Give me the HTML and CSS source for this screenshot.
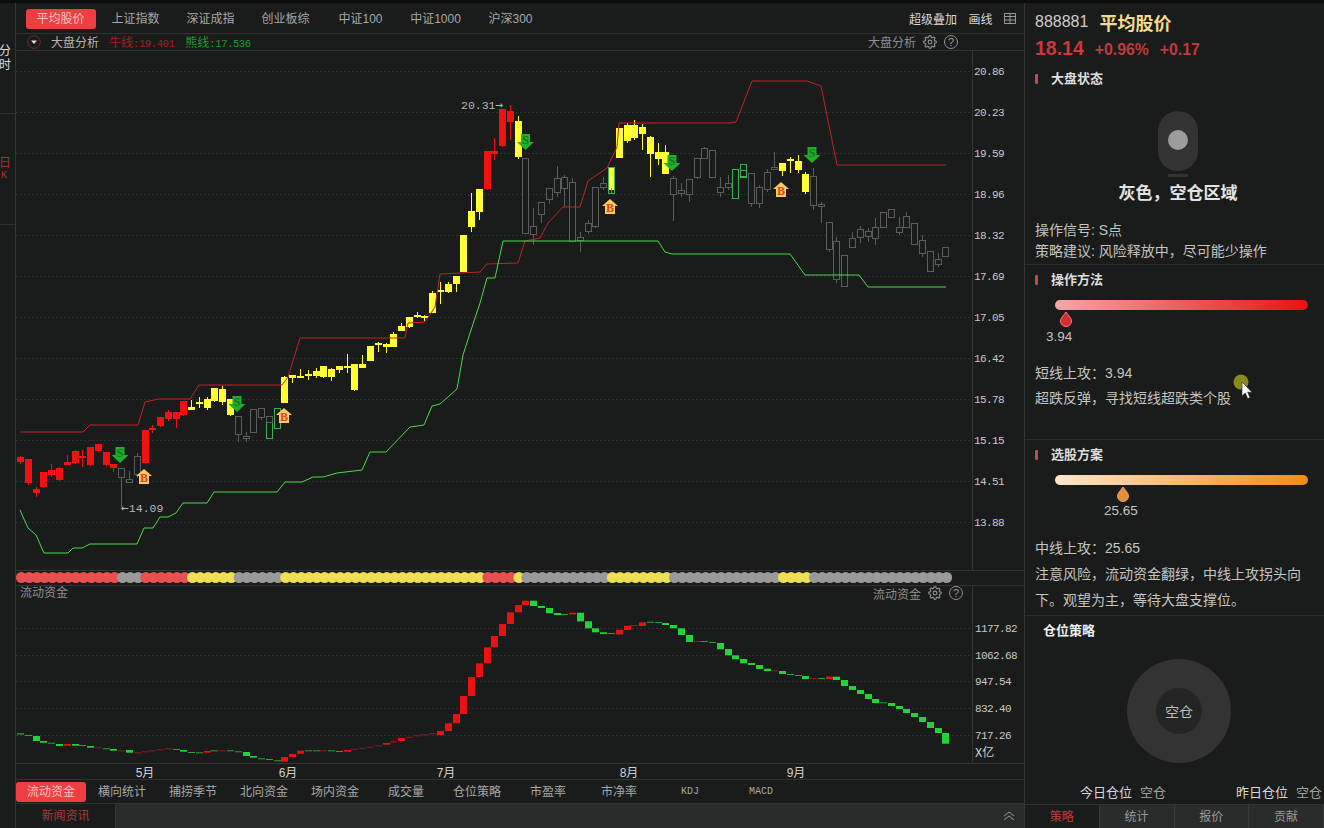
FILE: index.html
```html
<!DOCTYPE html>
<html lang="en">
<head>
  <meta charset="UTF-8"/>
  <title>平均股价</title>
  <link rel="stylesheet" href="styles.css">
</head>
<body>
<svg class="defs">
  <symbol id="gear" viewBox="0 0 24 24">
    <circle cx="12" cy="12" r="3.2"/>
    <path d="M19.4 15a1.65 1.65 0 0 0 .33 1.82l.06.06a2 2 0 0 1 0 2.83 2 2 0 0 1-2.83 0l-.06-.06a1.65 1.65 0 0 0-1.82-.33 1.65 1.65 0 0 0-1 1.51V21a2 2 0 0 1-2 2 2 2 0 0 1-2-2v-.09A1.65 1.65 0 0 0 9 19.4a1.65 1.65 0 0 0-1.82.33l-.06.06a2 2 0 0 1-2.83 0 2 2 0 0 1 0-2.83l.06-.06a1.65 1.65 0 0 0 .33-1.82 1.65 1.65 0 0 0-1.51-1H3a2 2 0 0 1-2-2 2 2 0 0 1 2-2h.09A1.65 1.65 0 0 0 4.6 9a1.65 1.65 0 0 0-.33-1.82l-.06-.06a2 2 0 0 1 0-2.83 2 2 0 0 1 2.83 0l.06.06a1.65 1.65 0 0 0 1.82.33H9a1.65 1.65 0 0 0 1-1.51V3a2 2 0 0 1 2-2 2 2 0 0 1 2 2v.09a1.65 1.65 0 0 0 1 1.51 1.65 1.65 0 0 0 1.82-.33l.06-.06a2 2 0 0 1 2.83 0 2 2 0 0 1 0 2.83l-.06.06a1.65 1.65 0 0 0-.33 1.82V9a1.65 1.65 0 0 0 1.51 1H21a2 2 0 0 1 2 2 2 2 0 0 1-2 2h-.09a1.65 1.65 0 0 0-1.51 1z"/>
  </symbol>
  <symbol id="pin" viewBox="0 0 14 16">
    <path d="M7 1C9 4 12.5 7 12.5 10a5.5 5.5 0 0 1-11 0C1.5 7 5 4 7 1z"/>
  </symbol>
</svg>

<div class="app">
  <nav class="rail">
    <div class="rail-item">分<br>时</div>
    <div class="rail-item rail-on">日<br><small>K</small></div>
  </nav>

  <main class="main">
    <div class="tabs">
      <a class="tab tab-on">平均股价</a>
      <a class="tab">上证指数</a>
      <a class="tab">深证成指</a>
      <a class="tab">创业板综</a>
      <a class="tab">中证100</a>
      <a class="tab">中证1000</a>
      <a class="tab">沪深300</a>
      <div class="tools">
        <span>超级叠加</span>
        <span>画线</span>
        <svg class="grid-ico" viewBox="0 0 12 11"><path d="M.5.5h11v10H.5zM.5 3.5h11M.5 7h11M6 .5v10"/></svg>
      </div>
    </div>

    <div class="subbar">
      <svg class="drop-ico" viewBox="0 0 14 14"><circle cx="7" cy="7" r="6.3"/><path d="M4 5.5h6L7 9z"/></svg>
      <span class="sub-name">大盘分析</span>
      <span class="bull">牛线<tt>:19.401</tt></span>
      <span class="bear">熊线<tt>:17.536</tt></span>
      <div class="sub-right">
        <span>大盘分析</span>
        <svg class="gear"><use href="#gear"/></svg>
        <i class="help">?</i>
      </div>
    </div>

    <svg id="kchart" class="kchart" viewBox="16 51 1008 519"></svg>
    <svg id="strip" class="strip" viewBox="16 571 1008 14"></svg>

    <div class="lower">
      <span class="lower-name">流动资金</span>
      <div class="lower-right">
        <span>流动资金</span>
        <svg class="gear"><use href="#gear"/></svg>
        <i class="help">?</i>
      </div>
      <svg id="flow" class="flow" viewBox="16 586 1008 193"></svg>
    </div>

    <div class="tabs2">
      <a class="tab2 tab-on">流动资金</a>
      <a class="tab2">横向统计</a>
      <a class="tab2">捕捞季节</a>
      <a class="tab2">北向资金</a>
      <a class="tab2">场内资金</a>
      <a class="tab2">成交量</a>
      <a class="tab2">仓位策略</a>
      <a class="tab2">市盈率</a>
      <a class="tab2">市净率</a>
      <a class="tab2 mono">KDJ</a>
      <a class="tab2 mono">MACD</a>
    </div>

    <div class="newsbar">
      <a class="news-tab">新闻资讯</a>
      <svg class="chev" viewBox="0 0 12 10"><path d="M1 5l5-4 5 4M1 9l5-4 5 4"/></svg>
    </div>
  </main>

  <aside class="side">
    <div class="quote">
      <div class="quote-name"><span class="code">888881</span><b class="cname">平均股价</b></div>
      <div class="quote-price"><b class="last">18.14</b><b class="chg">+0.96%</b><b class="chg">+0.17</b></div>
    </div>

    <section class="sec sec-status">
      <h3 class="sec-title">大盘状态</h3>
      <div class="light"><i></i></div>
      <div class="light-foot"></div>
      <div class="state">灰色，空仓区域</div>
      <p class="line21">操作信号: S点</p>
      <p class="line21">策略建议: 风险释放中，尽可能少操作</p>
    </section>

    <section class="sec sec-short">
      <h3 class="sec-title">操作方法</h3>
      <div class="gauge gauge-red"></div>
      <svg class="pin pin-red"><use href="#pin"/></svg>
      <div class="gauge-val val-red">3.94</div>
      <p class="line26 first">短线上攻：3.94</p>
      <p class="line26">超跌反弹，寻找短线超跌类个股</p>
    </section>

    <section class="sec sec-mid">
      <h3 class="sec-title">选股方案</h3>
      <div class="gauge gauge-orange"></div>
      <svg class="pin pin-orange"><use href="#pin"/></svg>
      <div class="gauge-val val-orange">25.65</div>
      <p class="line26 first">中线上攻：25.65</p>
      <p class="line26">注意风险，流动资金翻绿，中线上攻拐头向</p>
      <p class="line26">下。观望为主，等待大盘支撑位。</p>
    </section>

    <section class="sec-pos">
      <h3 class="pos-title">仓位策略</h3>
      <div class="donut"><span>空仓</span></div>
      <div class="pos-row">
        <span>今日仓位</span><em>空仓</em>
        <span class="pos-y">昨日仓位</span><em>空仓</em>
      </div>
    </section>

    <div class="side-tabs">
      <a class="side-tab side-on">策略</a>
      <a class="side-tab">统计</a>
      <a class="side-tab">报价</a>
      <a class="side-tab">贡献</a>
    </div>
  </aside>
</div>

<svg class="cursor" viewBox="0 0 24 32">
  <circle cx="8" cy="8" r="7.5" fill="#8a8a1c"/>
  <path d="M9 8v14l3.3-3 2.4 5.6 2.3-1-2.4-5.4h4.4z" fill="#fff" stroke="#222" stroke-width=".6"/>
</svg>

<script src="chart.js"></script>
</body>
</html>
```

FILE: styles.css
```css
*{box-sizing:border-box}
html,body{margin:0;padding:0;height:100%;overflow:hidden}
body{background:#1a1b1b;color:#c8c8c8;font:12px "Liberation Sans","Noto Sans CJK SC",sans-serif}
a{color:inherit;text-decoration:none}
tt{font:10.5px "Liberation Mono",monospace;letter-spacing:-.4px}
.defs{width:0;height:0;position:absolute}
.app{display:flex;height:828px;border-top:3px solid #0c0c0c}

/* left rail */
.rail{width:16px;flex:none;border-right:1px solid #343535}
.rail-item{height:111px;border-bottom:1px solid #303131;display:flex;flex-direction:column;justify-content:center;
           align-items:flex-start;font-size:12px;line-height:14px;color:#ddd;white-space:nowrap;margin-left:-1px}
.rail-on{color:#a83232;padding-bottom:2px}
.rail-on small{font:10px "Liberation Mono",monospace;padding-left:2px}

/* main */
.main{width:1008px;flex:none;display:flex;flex-direction:column}
.tabs{display:flex;align-items:center;height:31px;padding-left:7px;padding-top:1px;border-bottom:1px solid #313232}
.tab{width:75px;text-align:center;color:#a8a8a8;line-height:20px}
.tab-on{background:#ef3e42;color:#f4c4c4;border-radius:3px}
.tab.tab-on{width:70px;margin:0 2.5px}
.tools{margin-left:auto;display:flex;align-items:center;color:#d8d8d8;padding-right:8px}
.tools span{margin-right:11.5px}
.grid-ico{width:12px;height:11px;fill:none;stroke:#9a9a9a}

.subbar{display:flex;align-items:center;height:17px;padding:0 0 1px 11px;border-bottom:1px solid #313232;color:#b4b4b4}
.drop-ico{width:14px;height:14px}
.drop-ico circle{fill:none;stroke:#7a2a2a}
.drop-ico path{fill:#ddd}
.sub-name{margin-left:10px}
.bull{margin-left:10px;color:#a81c1c}
.bear{margin-left:11px;color:#1f9f2a}
.sub-right,.lower-right{margin-left:auto;display:flex;align-items:center;color:#8f8f8f}
.sub-right{padding-right:66px}
.gear{width:14px;height:14px;margin-left:7px;fill:none;stroke:#8f8f8f;stroke-width:2}
.help{width:14px;height:14px;margin-left:7px;border:1px solid #8f8f8f;border-radius:50%;
      font:normal 11px/12px "Liberation Sans",sans-serif;text-align:center;color:#9a9a9a}

.kchart{display:block;width:1008px;height:519px;flex:none}
.strip{display:block;width:1008px;height:16px;flex:none;border-top:1px solid #313232;border-bottom:1px solid #313232}
.lower{position:relative;height:193px;flex:none}
.flow{display:block;width:1008px;height:193px}
.lower-name{position:absolute;left:4px;top:-1px;line-height:16px;color:#8f8f8f}
.lower-right{position:absolute;right:61px;top:-1px;height:16px}

/* svg text */
.axis{font:11px "Liberation Mono",monospace;letter-spacing:-.6px;fill:#c8c8c8}
.peak{font:11.5px "Liberation Mono",monospace;fill:#b8b8b8}
.arrow{font:13px "DejaVu Sans Mono",monospace}
.date{font:12px "Liberation Sans","Noto Sans CJK SC",sans-serif;fill:#d0d0d0;text-anchor:middle}
.yi{font:12px "Liberation Mono","Noto Sans CJK SC",monospace;fill:#d0d0d0}
.sig{font:bold 12px "Liberation Serif",serif;text-anchor:middle}

.tabs2{display:flex;align-items:center;height:25px;padding-top:1px;border-top:1px solid #313232;border-bottom:1px solid #313232;color:#a8a8a8}
.tab2{width:71px;text-align:center;line-height:20px}
.tab2.tab-on{width:70px;margin-right:.5px}
.mono{font:10px/20px "Liberation Mono",monospace}
.newsbar{height:24px;flex:1;background:#2a2b2b;display:flex;align-items:center;justify-content:space-between}
.news-tab{width:100px;height:100%;background:#1a1b1b;border-right:1px solid #333;color:#a83a3a;
          line-height:24px;text-align:center}
.chev{width:12px;height:10px;margin-right:9px;fill:none;stroke:#9a9a9a}

/* right panel */
.side{width:300px;flex:none;border-left:1px solid #333;display:flex;flex-direction:column;padding-top:7px}
.quote{padding-left:10px;height:59px}
.quote-name{display:flex;align-items:center;height:24px}
.code{font-size:16px;color:#ccc}
.cname{font-size:18px;color:#f2dc8c;margin-left:11px}
.quote-price{display:flex;align-items:baseline;height:22px;margin-top:3px}
.last{font-size:19.5px;color:#d0353a}
.chg{font-size:15.8px;color:#c03a3e;margin-left:11px}
.sec{border-bottom:1px solid #2e2f2f;padding:0 0 0 10px}
.sec-title{position:relative;margin:0;padding-left:16px;font-size:13px;line-height:20px;color:#ddd}
.sec-title::before{content:"";position:absolute;left:0;top:5px;width:3px;height:10px;background:#c24a55;border-radius:1px}
.sec-status{height:196px}
.light{width:40px;height:60px;margin:22px 0 0 123px;background:#333;border-radius:20px;display:flex;align-items:center;justify-content:center;padding-bottom:2px}
.light i{width:20px;height:20px;border-radius:50%;background:#9c9c9c}
.light-foot{width:20px;height:3px;margin:3px 0 0 133px;background:#333}
.state{width:286px;text-align:center;font-size:17px;font-weight:bold;line-height:24px;color:#e4e4e4;margin-top:5px;height:38px}
p{margin:0;color:#c4c4c4;font-size:14px}
.line21{line-height:21px}
.line26{line-height:25px}
.sec-mid .line26{line-height:26px}
.first{margin-top:14px}
.sec-short{height:175px;padding-top:5px}
.sec-mid{height:176px;padding-top:5px}
.gauge{width:253px;height:10px;margin:10px 0 0 20px;border-radius:5px}
.gauge-red{background:linear-gradient(90deg,#f4a7aa,#e81212)}
.gauge-orange{background:linear-gradient(90deg,#fce6ce,#f28c14)}
.pin{display:block;width:14px;height:16px;margin-top:1px;stroke-width:1}
.pin-red{margin-left:24px;fill:#d42c30;stroke:#ee7f82}
.pin-orange{margin-left:81px;fill:#e58f3a;stroke:#e8a560}
.gauge-val{font-size:13.5px;line-height:20px;color:#c4c4c4}
.val-red{margin-left:11px}
.val-orange{margin:-1px 0 0 69px}
.sec-pos{flex:1;position:relative}
.pos-title{margin:5px 0 0 18px;font-size:13px;line-height:20px;color:#eee}
.donut{width:104px;height:104px;margin:18px 0 0 102px;border-radius:50%;background:#333;display:flex;align-items:center;justify-content:center;position:relative}
.donut::before{content:"";position:absolute;width:46px;height:46px;border-radius:50%;background:#242424}
.donut span{position:relative;color:#bdbdbd;font-size:14px}
.pos-row{display:flex;align-items:center;height:18px;margin-top:19px;padding-left:55px;color:#d8d8d8;font-size:13px;white-space:nowrap}
.pos-row em{font-style:normal;color:#a0a0a0;margin-left:8px}
.pos-y{margin-left:70px}
.side-tabs{display:flex;height:24px;background:#2a2b2b;border-top:1px solid #333}
.side-tab{width:76px;text-align:center;line-height:24px;color:#9a9a9a;border-right:1px solid #3a3a3a}
.side-on{background:#1a1b1b;color:#c03a3a}

.cursor{position:absolute;left:1233px;top:374px;width:24px;height:32px}
```

FILE: chart.js
```js
// candles: [type, wickTop, bodyTop, bodyBottom, wickBottom]
// r=red, y=yellow, k=hollow gray, g=hollow green. Values are page y pixels.
const candles = [
  ['r',456,457,462,464],['r',459,459,483,485],['r',487,489,493,497],['r',472,472,487,488],['r',464,470,475,477],
  ['r',467,468,480,481],['r',455,462,465,465],['r',450,451,463,464],['r',450,456,458,467],['r',447,447,465,466],
  ['r',444,444,451,452],['r',452,452,465,466],['r',464,464,468,472],['k',468,468,477,507],['k',471,479,482,482],
  ['k',453,456,474,478],['r',430,430,463,464],['r',425,428,430,433],['r',417,417,426,427],['r',410,412,419,421],
  ['r',412,412,419,428],['r',401,401,415,416],['y',400,407,410,410],['y',397,402,404,408],['y',397,399,408,410],
  ['y',388,388,401,402],['y',386,389,402,405],['y',399,399,415,416],['k',416,416,434,442],['k',432,436,437,442],
  ['k',409,409,432,433],['k',408,408,417,420],['g',416,416,438,438],['g',408,408,428,428],['y',376,377,403,403],
  ['y',375,375,378,383],['y',369,376,378,378],['y',370,374,376,380],['y',368,371,376,378],['y',366,366,377,378],
  ['y',368,369,377,381],['y',366,366,370,373],['y',354,366,367,373],['y',364,364,390,391],['y',355,364,368,368],
  ['y',346,346,361,361],['y',342,343,345,352],['y',343,344,347,353],['y',332,334,347,347],['y',323,326,331,331],
  ['y',317,317,327,328],['y',312,315,317,318],['y',315,316,318,321],['y',291,293,313,313],['y',282,290,292,304],
  ['y',282,284,292,293],['y',276,276,284,292],['y',235,235,272,272],['y',193,211,227,232],['y',189,189,212,220],
  ['r',151,151,189,190],['r',138,151,154,160],['r',109,109,146,147],['r',105,111,122,140],['y',116,121,157,159],
  ['k',158,158,233,234],['k',208,226,234,245],['k',202,202,214,223],['k',188,188,199,204],['k',166,178,192,197],
  ['k',175,177,188,207],['k',178,182,241,242],['k',232,237,240,252],['k',220,223,231,234],['k',187,187,226,228],
  ['k',177,183,187,190],['y',167,167,190,190],['y',128,128,158,158],['y',123,125,141,143],['y',120,125,138,140],
  ['y',124,127,134,150],['y',136,137,154,177],['y',143,152,159,165],['y',145,152,174,174],['k',176,178,194,221],
  ['k',183,190,193,197],['k',179,179,194,202],['k',158,158,177,179],['k',147,148,158,158],['k',150,150,177,177],
  ['k',177,187,192,197],['k',175,183,187,190],['g',169,169,198,198],['g',164,164,177,177],['k',173,173,203,207],
  ['k',185,187,203,208],['k',169,172,189,192],['k',152,167,168,168],['y',163,163,171,176],['y',157,159,161,173],
  ['y',155,161,170,173],['y',172,174,192,194],['k',168,176,205,210],['k',202,204,206,223],['k',222,222,249,252],
  ['k',237,241,279,283],['k',255,255,286,286],['k',232,238,247,247],['k',226,229,237,243],['k',228,231,236,242],
  ['k',218,227,238,245],['k',212,212,227,228],['k',209,209,217,217],['k',217,227,232,235],['k',212,216,227,228],
  ['k',223,223,244,244],['k',235,240,253,257],['k',251,251,271,271],['k',253,259,264,267],['k',247,247,256,256]
];

const bullLine = [[20,432],[83,432],[90,425],[138,425],[145,402],[159,399],[190,399],[199,385],[282,385],[288,377],[300,338],[405,338],[408,323],[425,322],[435,307],[440,274],[480,272],[487,264],[518,263],[525,241],[540,238],[548,223],[563,207],[580,207],[588,181],[607,168],[617,147],[619,123],[730,123],[736,122],[752,81],[807,81],[821,86],[837,165],[946,165]];
const bearLine = [[20,510],[28,528],[36,535],[44,553],[68,553],[73,548],[82,548],[90,544],[137,544],[144,528],[153,528],[160,517],[168,517],[176,513],[183,503],[207,503],[214,492],[277,492],[285,482],[302,482],[313,477],[323,477],[337,473],[362,470],[370,452],[386,452],[410,427],[424,425],[432,406],[440,404],[457,389],[463,355],[470,333],[480,303],[487,278],[495,278],[503,241],[658,241],[665,252],[672,254],[790,254],[805,275],[859,275],[868,287],[946,287]];

// flow bars: [top, bottom] in zoom units, colour by the letter. y = 560 + v/3
const flowBars = 'g520-524 g525-527 g528-543 g543-548 g548-551 g552-558 r552-557 g552-557 g555-557 g558-563 r562-565 g565-567 g567-572 r571-573 g570-578 r577-579 r574-576 r571-573 r568-570 r565-567 g567-569 g570-575 g576-578 g577-579 r573-578 g571-573 r571-573 g571-573 g574-576 g576-588 g588-593 g595-597 g597-599 g601-603 r591-605 r582-591 r572-581 g571-573 g571-573 r571-573 g571-573 g573-575 r570-575 r566-568 r563-566 r560-562 r556-558 r549-554 r544-548 r534-543 r530-532 r526-528 r523-525 r520-522 r513-525 r490-513 r462-490 r408-462 r351-408 r310-351 r262-310 r228-262 r192-228 r157-192 r135-157 r122-135 g122-138 g138-144 g144-160 g159-165 g162-164 r158-163 g158-184 g184-205 g205-217 g217-222 g219-221 r209-223 r197-210 r195-197 r187-198 g185-187 g186-188 g189-195 g195-205 g205-225 g225-246 r243-245 g243-245 g246-248 g249-268 g267-286 g286-298 g297-310 g309-315 g315-327 g326-333 r331-333 g333-342 g342-345 g345-347 g348-357 r354-356 g354-356 r350-357 g350-360 g360-378 g378-390 g390-402 g402-417 g417-429 g427-429 g429-438 g438-447 g447-459 g459-471 g471-486 g486-504 g504-519 g519-551'.split(' ');

// dots strip: [last candle index, colour]
const dotRuns = [[12,'#e85050'],[15,'#9a9a9a'],[21,'#e85050'],[27,'#eee055'],[33,'#9a9a9a'],[59,'#eee055'],[63,'#e85050'],[64,'#eee055'],[75,'#9a9a9a'],[83,'#eee055'],[97,'#9a9a9a'],[101,'#eee055'],[119,'#9a9a9a']];

const priceAxis = [['20.86',71],['20.23',112],['19.59',153],['18.96',194],['18.32',235],['17.69',276],['17.05',317],['16.42',358],['15.78',399],['15.15',440],['14.51',481],['13.88',522]];
const flowAxis = [['1177.82',628],['1062.68',655],['947.54',681],['832.40',708],['717.26',735]];
const months = [['5月',145],['6月',288],['7月',446],['8月',629],['9月',796]];

const sells = [[120,447],[525.5,134],[672,155],[237,396],[812,147]];
const buys = [[144,469],[284,408],[610,199],[781,182]];

const COL = {r:'#f01212',y:'#ffff33',k:'#5c5c5c',g:'#3fae58',bg:'#1a1b1b',red:'#c42424',green:'#48dc48'};
const xOf = n => 20.6 + 7.775*n;

function gridLines(axis){
  return axis.map(a=>`<line x1="16" x2="972" y1="${a[1]+.5}" y2="${a[1]+.5}" stroke="#2e2f2f" stroke-dasharray="2 2"/>`).join('');
}
function candleSvg(c,n){
  const left=Math.round(xOf(n)-3.5), mid=left+3.5, col=COL[c[0]], solid=c[0]==='r'||c[0]==='y';
  let s=`<line x1="${mid}" x2="${mid}" y1="${c[1]}" y2="${c[4]}" stroke="${col}"/>`;
  if(solid) s+=`<rect x="${left}" y="${c[2]}" width="7" height="${Math.max(c[3]-c[2],2)}" fill="${col}"/>`;
  else s+=`<rect x="${left+.5}" y="${c[2]+.5}" width="6" height="${Math.max(c[3]-c[2],2)}" fill="${COL.bg}" stroke="${col}"/>`;
  return s;
}
function polyline(pts,col){
  return `<polyline fill="none" stroke="${col}" points="${pts.map(p=>p.join(',')).join(' ')}"/>`;
}
function sellMark(m){
  const x=m[0],y=m[1];
  return `<path d="M${x-4.5} ${y}h9v8h4l-8.5 8-8.5-8h4z" fill="#1faf2c"/><text class="sig" x="${x}" y="${y+10}" fill="#0b7a14">S</text>`;
}
function buyMark(m){
  const x=m[0],y=m[1];
  return `<path d="M${x} ${y}l8 7h-3v8h-10v-8h-3z" fill="#ffc766"/><text class="sig" x="${x}" y="${y+13}" fill="#d8481a">B</text>`;
}

// price pane
let k='<line x1="972.5" x2="972.5" y1="51" y2="570" stroke="#343535"/>'+gridLines(priceAxis);
k+=candles.map(candleSvg).join('');
k+=`<rect x="${Math.round(xOf(76)-3.5)+.5}" y="167.5" width="6" height="26" fill="none" stroke="${COL.g}"/><rect x="${Math.round(xOf(76)-3.5)+3}" y="188" width="1" height="6" fill="${COL.g}"/>`;
k+=`<rect x="${Math.round(xOf(32)-3.5)+.5}" y="416.5" width="6" height="6" fill="none" stroke="${COL.k}"/><rect x="${Math.round(xOf(93)-3.5)+.5}" y="170.5" width="6" height="6" fill="none" stroke="${COL.g}"/>`;
k+=polyline(bullLine,COL.red)+polyline(bearLine,COL.green);
k+=sells.map(sellMark).join('')+buys.map(buyMark).join('');
k+='<text class="peak" x="461" y="109">20.31<tspan class="arrow">→</tspan></text><text class="peak" x="121" y="512"><tspan class="arrow">←</tspan>14.09</text>';
k+=priceAxis.map(a=>`<text class="axis" x="974" y="${a[1]+4}">${a[0]}</text>`).join('');
document.getElementById('kchart').innerHTML=k;

// coloured dots
let from=0, d='';
dotRuns.forEach(r=>{
  for(let n=from;n<=r[0];n++) d+=`<circle cx="${xOf(n)+.8}" cy="577.5" r="5.5" fill="${r[1]}"/>`;
  from=r[0]+1;
});
document.getElementById('strip').innerHTML=d;

// flow pane
let f='<line x1="972.5" x2="972.5" y1="586" y2="763" stroke="#343535"/><line x1="16" x2="1024" y1="763.5" y2="763.5" stroke="#343535"/>'+gridLines(flowAxis);
f+=flowBars.map((b,n)=>{
  const v=b.slice(1).split('-').map(Number), top=560+v[0]/3, h=Math.max((v[1]-v[0])/3,1);
  const col=b[0]==='r'?'#e81212':'#22d43a', thin=h<1.6;
  return `<rect x="${Math.round(xOf(n)-3.5)}" y="${top.toFixed(1)}" width="7" height="${h.toFixed(1)}" fill="${thin?(b[0]==='r'?'#8a2020':'#2ea03a'):col}"/>`;
}).join('');
f+=flowAxis.map(a=>`<text class="axis" x="975" y="${a[1]+4}">${a[0]}</text>`).join('');
f+='<text class="yi" x="975" y="757">X亿</text>';
f+=months.map(m=>`<text class="date" x="${m[1]}" y="777">${m[0]}</text>`).join('');
document.getElementById('flow').innerHTML=f;
```
